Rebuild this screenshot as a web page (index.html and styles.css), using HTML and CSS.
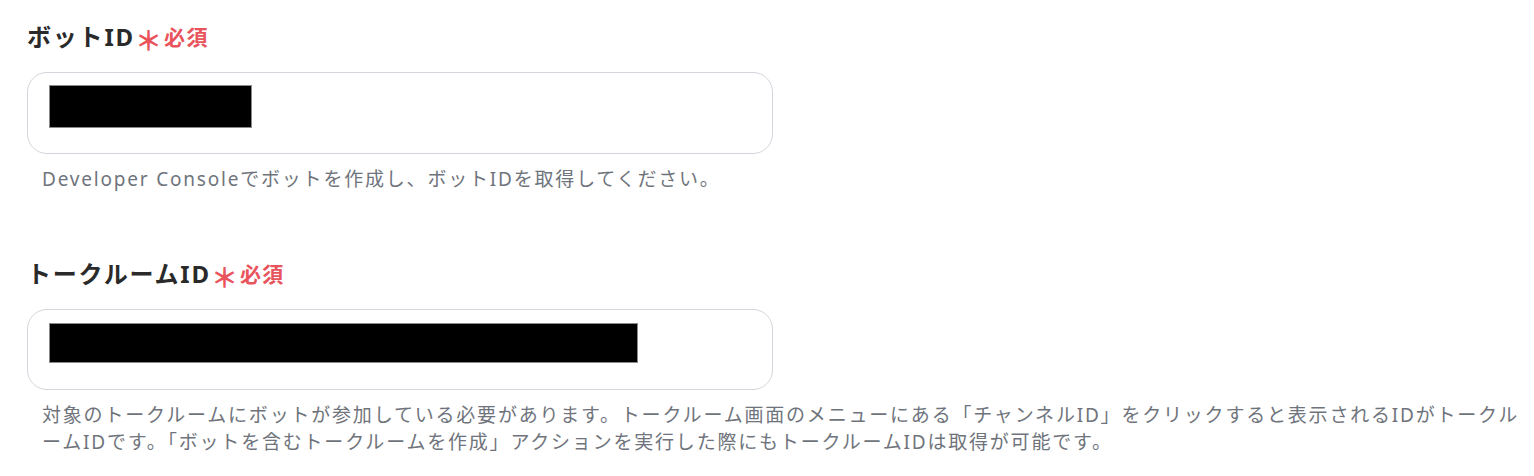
FILE: index.html
```html
<!DOCTYPE html>
<html lang="ja">
<head>
<meta charset="utf-8">
<title>ボット設定</title>
<link rel="stylesheet" href="styles.css">
</head>
<body>
<main class="form">
  <section class="field">
    <div class="label">ボットID<span class="req"><span class="star">＊</span>必須</span></div>
    <div class="input"><div class="redact redact-short"></div></div>
    <p class="help">Developer Consoleでボットを作成し、ボットIDを取得してください。</p>
  </section>
  <section class="field">
    <div class="label">トークルームID<span class="req"><span class="star">＊</span>必須</span></div>
    <div class="input input-2"><div class="redact redact-long"></div></div>
    <p class="help">対象のトークルームにボットが参加している必要があります。トークルーム画面のメニューにある「チャンネルID」をクリックすると表示されるIDがトークルームIDです。「ボットを含むトークルームを作成」アクションを実行した際にもトークルームIDは取得が可能です。</p>
  </section>
</main>
</body>
</html>
```

FILE: styles.css
```css
html, body {
  margin: 0;
  padding: 0;
  background: #ffffff;
}
body {
  font-family: "Noto Sans", "Noto Sans CJK JP", sans-serif;
  color: #2b2b2b;
}
.form {
  width: 1493px;
  padding: 21px 0 0 27px;
  display: flex;
  flex-direction: column;
  gap: 65px;
}
.field {
  display: flex;
  flex-direction: column;
}
.label {
  font-size: 24px;
  font-weight: 700;
  line-height: 32px;
  height: 32px;
  letter-spacing: 1.8px;
  color: #2a2a2a;
  display: flex;
  align-items: center;
}
.req {
  color: #e8535c;
  font-size: 21px;
  font-weight: 700;
  letter-spacing: 1.5px;
  display: inline-flex;
  align-items: center;
}
.star {
  font-family: "Noto Sans CJK JP", sans-serif;
  font-size: 27px;
  font-weight: 700;
  margin: 5px 2px 0 0;
  letter-spacing: 0;
}
.input {
  margin-top: 19px;
  width: 746px;
  height: 82px;
  box-sizing: border-box;
  border: 1px solid #d3d6dc;
  border-radius: 20px;
  background: #fff;
  padding: 12px 0 0 21px;
}
.input-2 {
  height: 81px;
  padding-top: 13px;
}
.redact {
  background: #000;
  box-shadow: 0 0 0 1px #8a8a8a inset;
}
.redact-short {
  width: 203px;
  height: 43px;
}
.redact-long {
  width: 589px;
  height: 40px;
}
.help {
  margin: 12px 0 0 0;
  padding-left: 15px;
  font-size: 19px;
  line-height: 27px;
  letter-spacing: 1.8px;
  color: #6f747c;
}
```
